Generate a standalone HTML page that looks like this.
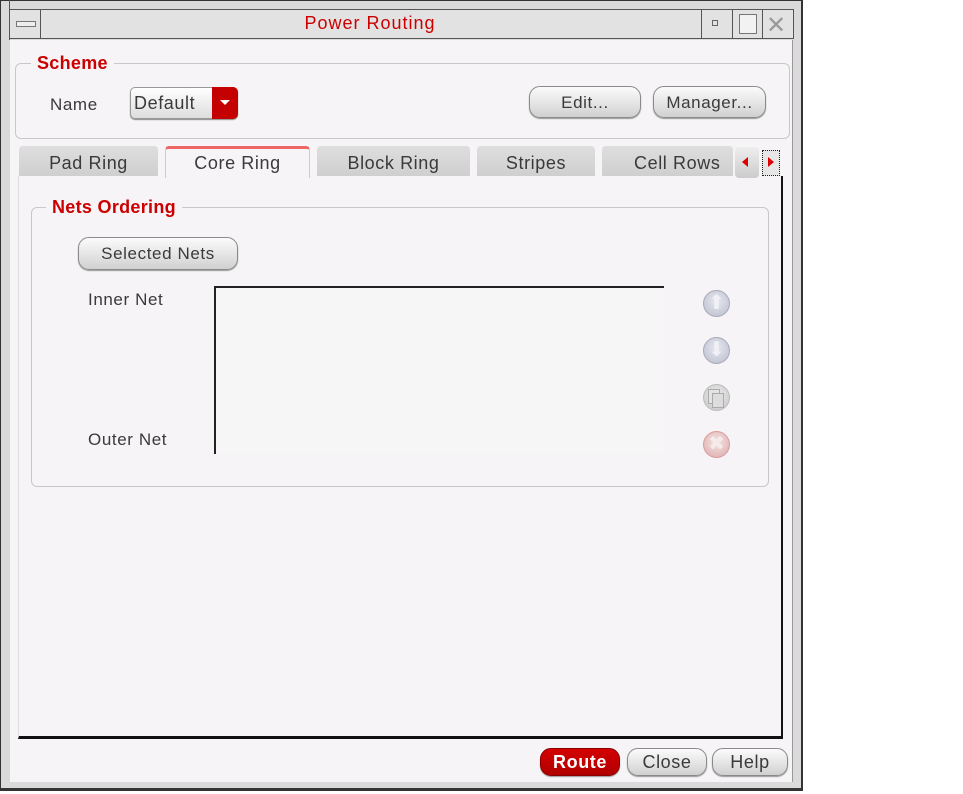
<!DOCTYPE html>
<html><head><meta charset="utf-8"><style>
*{box-sizing:border-box;margin:0;padding:0}
body{width:963px;height:794px;background:#fff;position:relative;overflow:hidden;font-family:"Liberation Sans",sans-serif;font-size:17px;color:#3a3a3a;letter-spacing:0.6px}
.a{position:absolute}
.btn{position:absolute;border:1px solid #8a8a8a;border-radius:11px;background:linear-gradient(#fbfbfb,#e2e2e2 60%,#d0d0d0);text-align:center;color:#3a3a3a;box-shadow:0 1px 1px #999}
.tab{position:absolute;top:146px;height:30px;background:linear-gradient(#dedede,#cfcfcf);border-radius:4px 4px 0 0;text-align:center;line-height:34px;color:#3a3a3a;font-size:18px}
.lbl{position:absolute;color:#cc0000;font-weight:bold;font-size:18px;background:#f6f4f6;padding:0 6px;letter-spacing:0.3px}
.circ{position:absolute;left:703px;width:27px;height:27px;border-radius:50%;border:1px solid #a8a8b8;background:radial-gradient(circle at 50% 40%,#e8e8f0,#b8bccc)}
.ic{position:absolute;left:703px;width:27px;text-align:center;color:#f0f0f6;font-size:20px;line-height:27px;letter-spacing:0}
</style></head><body>
<div class="a" style="left:0;top:0;width:803px;height:791px;background:#dadada;border:1px solid #333;border-bottom:3px solid #333;border-right:2px solid #333"></div>
<div class="a" style="left:9px;top:9px;width:785px;height:30px;background:#e2e2e2;border:1px solid #555"></div>
<div class="a" style="left:9px;top:0;width:1px;height:40px;background:#555"></div>
<div class="a" style="left:16px;top:21px;width:20px;height:6px;border:1px solid #777;background:#eee"></div>
<div class="a" style="left:40px;top:9px;width:1px;height:30px;background:#555"></div>
<div class="a" style="left:290px;top:13px;width:160px;text-align:center;color:#cc0000;font-size:18px;letter-spacing:1px">Power Routing</div>
<div class="a" style="left:701px;top:9px;width:1px;height:30px;background:#555"></div>
<div class="a" style="left:712px;top:20px;width:6px;height:6px;border:1px solid #666"></div>
<div class="a" style="left:732px;top:9px;width:1px;height:30px;background:#555"></div>
<div class="a" style="left:739px;top:14px;width:18px;height:20px;border:1px solid #777;background:#f2f2f2"></div>
<div class="a" style="left:762px;top:9px;width:1px;height:30px;background:#555"></div>
<div class="a" style="left:766px;top:11px;font-size:24px;color:#999">✕</div>
<div class="a" style="left:10px;top:40px;width:783px;height:742px;background:#f6f4f6;border-right:1px solid #999"></div>
<!-- scheme -->
<div class="a" style="left:15px;top:63px;width:775px;height:76px;border:1px solid #c8c8c8;border-radius:6px"></div>
<div class="lbl" style="left:31px;top:53px">Scheme</div>
<div class="a" style="left:50px;top:95px">Name</div>
<div class="a" style="left:130px;top:87px;width:108px;height:32px;border:1px solid #999;border-radius:5px;background:linear-gradient(#fff,#ddd);box-shadow:0 1px 1px #888"></div>
<div class="a" style="left:134px;top:93px;font-size:18px">Default</div>
<div class="a" style="left:212px;top:87px;width:26px;height:32px;background:#c40000;border-radius:0 5px 5px 0"></div>
<div class="a" style="left:220px;top:100px;width:0;height:0;border-left:5px solid transparent;border-right:5px solid transparent;border-top:5px solid #fff"></div>
<div class="btn" style="left:529px;top:86px;width:112px;height:32px;line-height:31px">Edit...</div>
<div class="btn" style="left:653px;top:86px;width:113px;height:32px;line-height:31px">Manager...</div>
<!-- tabs -->
<div class="tab" style="left:19px;width:139px">Pad Ring</div>
<div class="tab" style="left:165px;width:145px;background:#f6f4f6;border:1px solid #ccc;border-top:3px solid #e66;border-bottom:none;height:32px;line-height:28px">Core Ring</div>
<div class="tab" style="left:317px;width:153px">Block Ring</div>
<div class="tab" style="left:477px;width:118px">Stripes</div>
<div class="tab" style="left:602px;width:131px;text-align:left;padding-left:32px">Cell Rows</div>
<div class="a" style="left:735px;top:147px;width:24px;height:31px;border-radius:4px;background:linear-gradient(#eee,#ccc)"></div>
<div class="a" style="left:742px;top:157px;border-top:5px solid transparent;border-bottom:5px solid transparent;border-right:6px solid #d00"></div>
<div class="a" style="left:762px;top:150px;width:18px;height:26px;border:1px dotted #222;background:#e6e6e6"></div>
<div class="a" style="left:768px;top:157px;border-top:5px solid transparent;border-bottom:5px solid transparent;border-left:6px solid #d00"></div>
<!-- panel -->
<div class="a" style="left:18px;top:176px;width:765px;height:563px;border-left:1px solid #ddd;border-right:2px solid #111;border-bottom:3px solid #111"></div>
<div class="a" style="left:31px;top:207px;width:738px;height:280px;border:1px solid #c8c8c8;border-radius:6px"></div>
<div class="lbl" style="left:46px;top:197px">Nets Ordering</div>
<div class="btn" style="left:78px;top:237px;width:160px;height:33px;line-height:32px">Selected Nets</div>
<div class="a" style="left:88px;top:290px">Inner Net</div>
<div class="a" style="left:88px;top:430px">Outer Net</div>
<div class="a" style="left:214px;top:286px;width:450px;height:168px;border-left:2px solid #222;border-top:2px solid #222;background:#f7f6f7"></div>
<div class="circ" style="top:290px"></div><div class="ic" style="top:290px">⬆</div>
<div class="circ" style="top:337px"></div><div class="ic" style="top:337px">⬇</div>
<div class="circ" style="top:384px;background:radial-gradient(circle at 50% 40%,#eee,#c4c4c4);border-color:#bbb"></div>
<div class="a" style="left:708px;top:389px;width:12px;height:15px;border:1px solid #aaa;background:#e4e4e4"></div>
<div class="a" style="left:712px;top:393px;width:12px;height:15px;border:1px solid #aaa;background:#ddd"></div>
<div class="circ" style="top:431px;background:radial-gradient(circle at 50% 40%,#f4e4e4,#dcaaaa);border-color:#d99"></div><div class="ic" style="top:431px;color:#f6eaea">✖</div>
<!-- bottom buttons -->
<div class="btn" style="left:540px;top:748px;width:80px;height:28px;line-height:26px;background:linear-gradient(#d40000,#b00000);color:#fff;font-weight:bold;font-size:18px;border-color:#800">Route</div>
<div class="btn" style="left:627px;top:748px;width:80px;height:28px;line-height:26px;font-size:18px">Close</div>
<div class="btn" style="left:712px;top:748px;width:76px;height:28px;line-height:26px;font-size:18px">Help</div>
</body></html>
